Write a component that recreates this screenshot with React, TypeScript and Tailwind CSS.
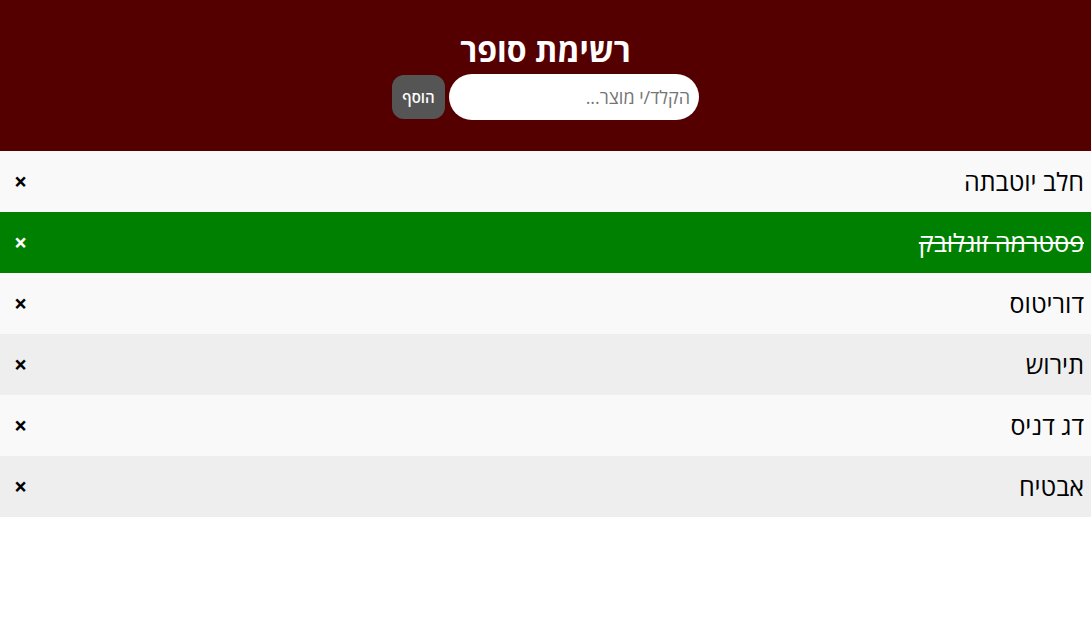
import React, { useState } from "react";

type Item = {
  id: number;
  name: string;
  done: boolean;
};

const initialItems: Item[] = [
  { id: 1, name: "חלב יוטבתה", done: false },
  { id: 2, name: "פסטרמה זוגלובק", done: true },
  { id: 3, name: "דוריטוס", done: false },
  { id: 4, name: "תירוש", done: false },
  { id: 5, name: "דג דניס", done: false },
  { id: 6, name: "אבטיח", done: false },
];

export default function App() {
  const [items, setItems] = useState<Item[]>(initialItems);
  const [text, setText] = useState("");

  const addItem = () => {
    if (!text.trim()) return;
    setItems([...items, { id: Date.now(), name: text.trim(), done: false }]);
    setText("");
  };

  return (
    <div dir="rtl" className="min-h-screen bg-white font-['Open_Sans','Noto_Sans',sans-serif]">
      <div className="flex h-[151px] flex-col items-center bg-[#550000] pt-[29px]">
        <h2 className="text-[32px] font-bold leading-[42px] text-white">רשימת סופר</h2>
        <div className="mt-[3px] flex items-center gap-[4px]">
          <input
            value={text}
            onChange={(e) => setText(e.target.value)}
            placeholder="הקלד/י מוצר..."
            className="h-[46px] w-[250px] rounded-full bg-white pr-[9px] pl-[14px] text-[18px] text-black outline-none placeholder:text-[#757575]"
          />
          <button
            onClick={addItem}
            className="h-[44px] w-[53px] rounded-[12px] bg-[#555555] text-[15px] font-semibold text-white"
          >
            הוסף
          </button>
        </div>
      </div>
      <ul>
        {items.map((item, i) => (
          <li
            key={item.id}
            onClick={() =>
              setItems(items.map((it) => (it.id === item.id ? { ...it, done: !it.done } : it)))
            }
            className={`flex h-[61px] cursor-pointer items-center justify-between pr-[7px] pl-[14px] text-[25px] ${
              item.done
                ? "bg-[#008000] text-white"
                : i % 2 === 0
                ? "bg-[#f9f9f9] text-black"
                : "bg-[#eeeeee] text-black"
            }`}
          >
            <span className={item.done ? "line-through" : ""}>{item.name}</span>
            <span
              onClick={(e) => {
                e.stopPropagation();
                setItems(items.filter((it) => it.id !== item.id));
              }}
              className="text-[23px] font-bold"
            >
              ×
            </span>
          </li>
        ))}
      </ul>
    </div>
  );
}
